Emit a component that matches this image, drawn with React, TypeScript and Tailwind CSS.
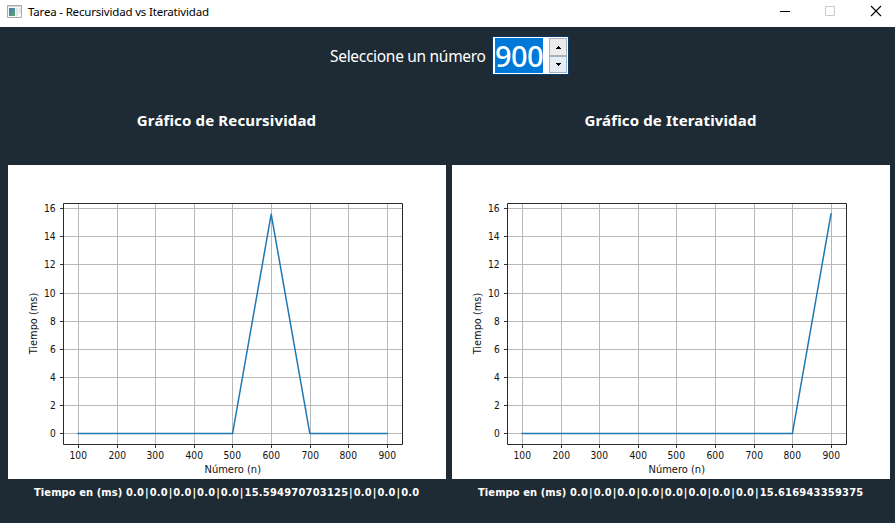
import { Fragment } from 'react';

const xTicks = [100, 200, 300, 400, 500, 600, 700, 800, 900];
const xPositions = [70.5, 109.5, 147.5, 186.5, 224.5, 263.5, 302.5, 340.5, 379.5];
const yTicks = [16, 14, 12, 10, 8, 6, 4, 2, 0];
const yPositions = [43.5, 71.5, 99.5, 128.5, 156.5, 184.5, 212.5, 240.5, 268.5];

const toX = (n: number) => 70.2 + ((n - 100) / 800) * 308.8;
const toY = (ms: number) => 268.4 - ms * 14.06;

function Chart({ values }: { values: number[] }) {
  const points = values.map((v, i) => `${toX(xTicks[i])},${toY(v)}`).join(' ');
  return (
    <svg className="block h-[314px] w-[438px] bg-white" viewBox="0 0 438 314" fontFamily='"DejaVu Sans", sans-serif' fontSize="10" fill="#111">
      {xPositions.map((x, i) => (
        <g key={x}>
          <path d={`M${x} 38V279`} stroke="#b8b8b8" />
          <path d={`M${x} 279V283`} stroke="#333" />
          <text x={x - 9} y="294" textLength="17.5" lengthAdjust="spacingAndGlyphs">{xTicks[i]}</text>
        </g>
      ))}
      {yPositions.map((y, i) => (
        <g key={y}>
          <path d={`M55 ${y}H395`} stroke="#b8b8b8" />
          <path d={`M52 ${y}H55`} stroke="#333" />
          <text x={yTicks[i] > 9 ? 36 : 42} y={y + 3.5} textLength={yTicks[i] > 9 ? 11.7 : 5.8} lengthAdjust="spacingAndGlyphs">{yTicks[i]}</text>
        </g>
      ))}
      <polyline points={points} fill="none" stroke="#1f77b4" strokeWidth="1.5" strokeLinejoin="round" strokeLinecap="square" />
      <path d="M55.5 38.5H394.5V279.5H55.5Z" fill="none" stroke="#2a2a2a" />
      <text x="196.5" y="308" textLength="56.5" lengthAdjust="spacingAndGlyphs">Número (n)</text>
      <text transform="translate(28.7 189.3) rotate(-90)" textLength="61.5" lengthAdjust="spacingAndGlyphs">Tiempo (ms)</text>
    </svg>
  );
}

function Panel({ title, values }: { title: string; values: number[] }) {
  return (
    <section className="w-[438px]">
      <h2 className="h-[82px] pt-[25px] pr-px text-center font-['Noto_Sans',sans-serif] text-[15px] leading-[24px] font-bold tracking-[0.15px] whitespace-nowrap">{title}</h2>
      <Chart values={values} />
      <p className="pt-[6px] pl-[26px] font-['DejaVu_Sans_Condensed','DejaVu_Sans',sans-serif] text-[11px] leading-[16px] font-bold tracking-[0.1px] whitespace-nowrap">
        Tiempo en (ms){' '}
        <span className="tracking-[0.24px]">
          {values.map((v, i) => (
            <Fragment key={i}>
              {i > 0 && <span className="mx-[0.8px]">|</span>}
              {v === 0 ? '0.0' : v}
            </Fragment>
          ))}
        </span>
      </p>
    </section>
  );
}

function AppIcon() {
  return (
    <svg className="ml-[7px] h-[14px] w-[16px]" viewBox="0 0 16 14">
      <defs>
        <linearGradient id="pane" x1="0" y1="0" x2="1" y2="1">
          <stop offset="0" stopColor="#4c78ba" />
          <stop offset="1" stopColor="#55a565" />
        </linearGradient>
      </defs>
      <path d="M.5.5h14v12H.5z" fill="#f8f8f8" stroke="#a8abad" />
      <path d="M1 1.5h13" stroke="#d6d6d6" />
      <path d="M2 3h6v8H2z" fill="url(#pane)" />
      <path d="M9 3h2v8H9zM12 3h2v5h-2z" fill="#e2e4e7" />
    </svg>
  );
}

export default function App() {
  return (
    <div className="h-[523px] w-[895px] overflow-hidden bg-[#1f2b34] text-white">
      <header className="flex h-[27px] items-center bg-white pb-[3px] text-black">
        <AppIcon />
        <h1 className="ml-[5px] font-['Noto_Sans',sans-serif] text-[11.5px] tracking-[-0.18px] whitespace-nowrap">Tarea - Recursividad vs Iteratividad</h1>
        <svg className="ml-auto h-[24px] w-[135px]" viewBox="0 0 135 24" fill="none">
          <path d="M20 11.5h10" stroke="#000" />
          <path d="M65.5 6.5h9v9h-9z" stroke="#ccc" />
          <path d="M111 6l10 10M121 6l-10 10" stroke="#000" strokeWidth="1.1" />
        </svg>
      </header>
      <div className="flex h-[56px] items-start pt-[9px] pl-[330px]">
        <label className="w-[162px] shrink-0 pt-[7px] font-['Noto_Sans',sans-serif] text-[15.5px] leading-[26px] tracking-[-0.3px] whitespace-nowrap">Seleccione un número</label>
        <div className="flex h-[39px] w-[77px] border border-[#063b6b] bg-white pt-[1px] pl-[2px]">
          <span className="h-[35px] w-[48px] bg-[#0078d7] font-['Noto_Sans',sans-serif] text-[29px] leading-[36px] font-medium tracking-[-0.6px]">900</span>
          <div className="ml-[6px] flex w-[18px] flex-col">
            <div className="flex h-[18px] items-center justify-center border border-[#aab2ba] bg-[#ececec]">
              <svg className="h-[3px] w-[5px]" viewBox="0 0 5 3"><path d="M0 3V2H1V1H2V0H3V1H4V2H5V3Z" fill="#000" /></svg>
            </div>
            <div className="flex h-[17px] items-center justify-center border border-[#9eb5ca] bg-[#e6edf5]">
              <svg className="h-[3px] w-[5px]" viewBox="0 0 5 3"><path d="M0 0V1H1V2H2V3H3V2H4V1H5V0Z" fill="#000" /></svg>
            </div>
          </div>
        </div>
      </div>
      <main className="flex gap-[6px] pl-[8px]">
        <Panel title="Gráfico de Recursividad" values={[0, 0, 0, 0, 0, 15.594970703125, 0, 0, 0]} />
        <Panel title="Gráfico de Iteratividad" values={[0, 0, 0, 0, 0, 0, 0, 0, 15.616943359375]} />
      </main>
    </div>
  );
}
